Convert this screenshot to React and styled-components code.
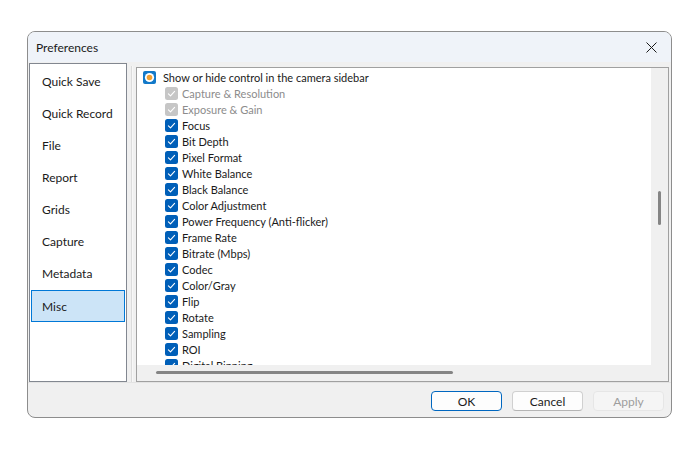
import React from "react";
import styled, { createGlobalStyle } from "styled-components";

const Global = createGlobalStyle`
  html, body { margin: 0; padding: 0; background: #ffffff; }
  body { font-family: Lato, "Liberation Sans", sans-serif; font-size: 12px; color: #1b1b1b; }
  * { box-sizing: border-box; }
`;

const Stage = styled.div`
  width: 700px;
  height: 450px;
  padding: 31px 0 0 27px;
`;

const Window = styled.div`
  width: 645px;
  height: 387px;
  border: 1px solid #8d8d8d;
  border-radius: 8px;
  overflow: hidden;
  display: flex;
  flex-direction: column;
  background: #f0f0f0;
`;

const TitleBar = styled.div`
  height: 30px;
  flex: none;
  background: #eff3f9;
  display: flex;
  align-items: center;
  justify-content: space-between;
  padding: 0 8px 0 8px;
`;

const Title = styled.span`
  font-size: 12px;
  color: #1a1a1a;
`;

const CloseBtn = styled.div`
  width: 22px;
  height: 22px;
  display: flex;
  align-items: center;
  justify-content: center;
  margin-right: 1px;
`;

const Body = styled.div`
  flex: 1;
  display: flex;
  flex-direction: column;
`;

const Main = styled.div`
  display: flex;
  padding: 1px 2px 0 1px;
  height: 320px;
  flex: none;
`;

const NavList = styled.div`
  width: 98px;
  height: 319px;
  background: #ffffff;
  border: 1px solid #828790;
  padding: 1px;
  display: flex;
  flex-direction: column;
  flex: none;
`;

const NavItem = styled.div`
  height: 32px;
  display: flex;
  align-items: center;
  padding-left: 10px;
  border: 1px solid ${(p) => (p.$active ? "#0078d7" : "transparent")};
  background: ${(p) => (p.$active ? "#cce4f7" : "transparent")};
  margin-top: ${(p) => (p.$active ? "1px" : "0")};
  color: #1a1a1a;
`;

const Splitter = styled.div`
  width: 9px;
  flex: none;
  display: flex;
  justify-content: center;
  padding-top: 3px;
`;

const SplitLine = styled.div`
  width: 2px;
  height: 316px;
  border-left: 1px solid #dcdcdc;
  border-right: 1px solid #f7f7f7;
`;

const Frame = styled.div`
  flex: 1;
  margin-top: 4px;
  height: 315px;
  border: 1px solid #a0a0a0;
  display: grid;
  grid-template-columns: 1fr 17px;
  grid-template-rows: 1fr 16px;
  background: #f0f0f0;
`;

const Viewport = styled.div`
  background: #ffffff;
  overflow: hidden;
  padding: 1px 0 0 6px;
`;

const Row = styled.div`
  height: 16px;
  display: flex;
  align-items: center;
  gap: ${(p) => (p.$root ? "7px" : "4px")};
  padding-left: ${(p) => (p.$root ? "0" : "22px")};
  color: ${(p) => (p.$disabled ? "#8c8c8c" : "#1a1a1a")};
  font-size: 11px;
  white-space: nowrap;
`;

const VTrack = styled.div`
  background: #f0f0f0;
  position: relative;
`;

const VThumb = styled.div`
  position: absolute;
  left: 7px;
  top: 123px;
  width: 3px;
  height: 34px;
  border-radius: 2px;
  background: #858585;
`;

const HTrack = styled.div`
  background: #f0f0f0;
  position: relative;
`;

const HThumb = styled.div`
  position: absolute;
  left: 19px;
  top: 6px;
  width: 297px;
  height: 3px;
  border-radius: 2px;
  background: #858585;
`;

const Corner = styled.div`
  background: #f0f0f0;
`;

const Footer = styled.div`
  flex: 1;
  border-top: 1px solid #e3e3e3;
  display: flex;
  justify-content: flex-end;
  align-items: flex-start;
  padding: 8px 7px 0 0;
  gap: 10px;
`;

const Button = styled.div`
  width: 71px;
  height: 20px;
  border-radius: 4px;
  background: ${(p) => (p.$disabled ? "#f5f5f5" : "#fdfdfd")};
  border: 1px solid ${(p) => (p.$primary ? "#0067c0" : p.$disabled ? "#e6e6e6" : "#d0d0d0")};
  border-bottom-color: ${(p) => (p.$primary ? "#0067c0" : p.$disabled ? "#e6e6e6" : "#b5b5b5")};
  color: ${(p) => (p.$disabled ? "#9d9d9d" : "#1a1a1a")};
  display: flex;
  align-items: center;
  justify-content: center;
  font-size: 12px;
`;

const Check = ({ disabled }) => (
  <svg width="13" height="13" viewBox="0 0 13 13">
    <rect x="0" y="0" width="13" height="13" rx="2.5" fill={disabled ? "#c6c6c6" : "#005fb8"} />
    <path d="M3.4 6.8 L5.5 8.8 L9.6 4.4" fill="none" stroke="#ffffff" strokeWidth="1.1" strokeLinecap="round" strokeLinejoin="round" />
  </svg>
);

const RootIcon = () => (
  <svg width="13" height="13" viewBox="0 0 13 13">
    <rect x="0" y="0" width="13" height="13" rx="2" fill="#1279c9" />
    <circle cx="6.5" cy="6.5" r="4.6" fill="#ffffff" />
    <circle cx="6.5" cy="6.5" r="2.8" fill="#f0a032" />
  </svg>
);

const navItems = ["Quick Save", "Quick Record", "File", "Report", "Grids", "Capture", "Metadata", "Misc"];

const rows = [
  ["Capture & Resolution", true],
  ["Exposure & Gain", true],
  ["Focus"],
  ["Bit Depth"],
  ["Pixel Format"],
  ["White Balance"],
  ["Black Balance"],
  ["Color Adjustment"],
  ["Power Frequency (Anti-flicker)"],
  ["Frame Rate"],
  ["Bitrate (Mbps)"],
  ["Codec"],
  ["Color/Gray"],
  ["Flip"],
  ["Rotate"],
  ["Sampling"],
  ["ROI"],
  ["Digital Binning"],
];

export default function App() {
  return (
    <Stage>
      <Global />
      <Window>
        <TitleBar>
          <Title>Preferences</Title>
          <CloseBtn>
            <svg width="11" height="11" viewBox="0 0 11 11">
              <path d="M0.5 0.5 L10.5 10.5 M10.5 0.5 L0.5 10.5" stroke="#1a1a1a" strokeWidth="1" />
            </svg>
          </CloseBtn>
        </TitleBar>
        <Body>
          <Main>
            <NavList>
              {navItems.map((n) => (
                <NavItem key={n} $active={n === "Misc"}>{n}</NavItem>
              ))}
            </NavList>
            <Splitter>
              <SplitLine />
            </Splitter>
            <Frame>
              <Viewport>
                <Row $root>
                  <RootIcon />
                  <span>Show or hide control in the camera sidebar</span>
                </Row>
                {rows.map(([label, dis]) => (
                  <Row key={label} $disabled={dis}>
                    <Check disabled={dis} />
                    <span>{label}</span>
                  </Row>
                ))}
              </Viewport>
              <VTrack>
                <VThumb />
              </VTrack>
              <HTrack>
                <HThumb />
              </HTrack>
              <Corner />
            </Frame>
          </Main>
          <Footer>
            <Button $primary>OK</Button>
            <Button>Cancel</Button>
            <Button $disabled>Apply</Button>
          </Footer>
        </Body>
      </Window>
    </Stage>
  );
}
